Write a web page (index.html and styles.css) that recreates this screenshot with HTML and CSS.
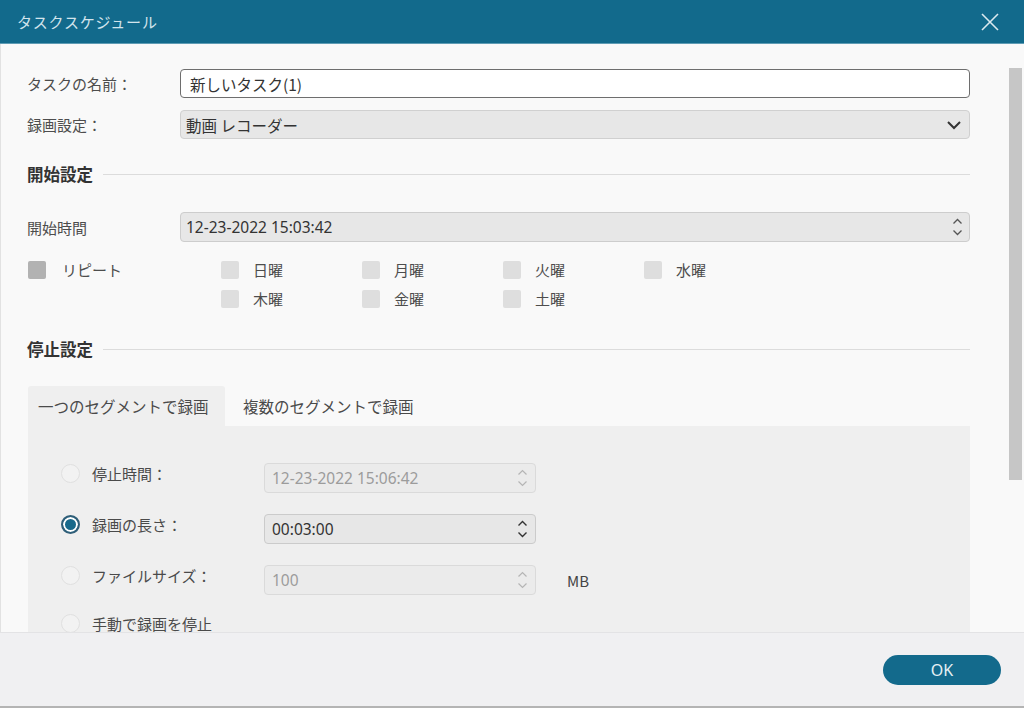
FILE: index.html
```html
<!DOCTYPE html>
<html lang="ja">
<head>
<meta charset="utf-8">
<title>タスクスケジュール</title>
<link rel="stylesheet" href="styles.css">
</head>
<body>
<div class="window">
  <header class="titlebar">
    <span class="title">タスクスケジュール</span>
    <svg class="close" width="20" height="20" viewBox="0 0 20 20"><path d="M2 2 L18 18 M18 2 L2 18" stroke="#dbe9ef" stroke-width="1.6" fill="none"/></svg>
  </header>
  <div class="main">
    <div class="content">
      <div class="frow">
        <label class="flabel">タスクの名前：</label>
        <div class="field field-text">新しいタスク(1)</div>
      </div>
      <div class="frow">
        <label class="flabel">録画設定：</label>
        <div class="field field-select">
          <span>動画 レコーダー</span>
          <svg class="chev" width="16" height="10" viewBox="0 0 16 10"><path d="M2 2 L8 8 L14 2" stroke="#333" stroke-width="2" fill="none"/></svg>
        </div>
      </div>

      <div class="section s-start"><span class="stitle">開始設定</span><span class="sline"></span></div>

      <div class="frow frow-start">
        <label class="flabel">開始時間</label>
        <div class="field field-spin">
          <span class="num">12-23-2022 15:03:42</span>
          <span class="spin">
            <svg width="11" height="7" viewBox="0 0 11 7"><path d="M1.5 5.5 L5.5 1.5 L9.5 5.5" stroke="#555" stroke-width="1.3" fill="none"/></svg>
            <svg width="11" height="7" viewBox="0 0 11 7"><path d="M1.5 1.5 L5.5 5.5 L9.5 1.5" stroke="#555" stroke-width="1.3" fill="none"/></svg>
          </span>
        </div>
      </div>

      <div class="checks">
        <div class="check"><span class="box box-dark"></span><span class="clabel">リピート</span></div>
        <div class="check"><span class="box"></span><span class="clabel">日曜</span></div>
        <div class="check"><span class="box"></span><span class="clabel">月曜</span></div>
        <div class="check"><span class="box"></span><span class="clabel">火曜</span></div>
        <div class="check"><span class="box"></span><span class="clabel">水曜</span></div>
        <div class="check empty"></div>
        <div class="check"><span class="box"></span><span class="clabel">木曜</span></div>
        <div class="check"><span class="box"></span><span class="clabel">金曜</span></div>
        <div class="check"><span class="box"></span><span class="clabel">土曜</span></div>
      </div>

      <div class="section s-stop"><span class="stitle">停止設定</span><span class="sline"></span></div>

      <div class="tabs">
        <div class="tab active">一つのセグメントで録画</div>
        <div class="tab">複数のセグメントで録画</div>
      </div>
      <div class="panel">
        <div class="prow">
          <div class="opt"><span class="radio"></span><span class="olabel">停止時間：</span></div>
          <div class="pfield disabled">
            <span class="num">12-23-2022 15:06:42</span>
            <span class="spin">
              <svg width="11" height="7" viewBox="0 0 11 7"><path d="M1.5 5.5 L5.5 1.5 L9.5 5.5" stroke="#b5b5b5" stroke-width="1.2" fill="none"/></svg>
              <svg width="11" height="7" viewBox="0 0 11 7"><path d="M1.5 1.5 L5.5 5.5 L9.5 1.5" stroke="#b5b5b5" stroke-width="1.2" fill="none"/></svg>
            </span>
          </div>
        </div>
        <div class="prow">
          <div class="opt"><span class="radio checked"></span><span class="olabel">録画の長さ：</span></div>
          <div class="pfield">
            <span class="num">00:03:00</span>
            <span class="spin">
              <svg width="11" height="7" viewBox="0 0 11 7"><path d="M1.5 5.5 L5.5 1.5 L9.5 5.5" stroke="#333" stroke-width="1.4" fill="none"/></svg>
              <svg width="11" height="7" viewBox="0 0 11 7"><path d="M1.5 1.5 L5.5 5.5 L9.5 1.5" stroke="#333" stroke-width="1.4" fill="none"/></svg>
            </span>
          </div>
        </div>
        <div class="prow prow-tight">
          <div class="opt"><span class="radio"></span><span class="olabel">ファイルサイズ：</span></div>
          <div class="pfield disabled">
            <span class="num">100</span>
            <span class="spin">
              <svg width="11" height="7" viewBox="0 0 11 7"><path d="M1.5 5.5 L5.5 1.5 L9.5 5.5" stroke="#b5b5b5" stroke-width="1.2" fill="none"/></svg>
              <svg width="11" height="7" viewBox="0 0 11 7"><path d="M1.5 1.5 L5.5 5.5 L9.5 1.5" stroke="#b5b5b5" stroke-width="1.2" fill="none"/></svg>
            </span>
          </div>
          <span class="unit">MB</span>
        </div>
        <div class="prow">
          <div class="opt"><span class="radio"></span><span class="olabel">手動で録画を停止</span></div>
        </div>
      </div>
    </div>
    <div class="scrollcol"><div class="thumb"></div></div>
  </div>
  <footer class="footer">
    <button class="ok">OK</button>
  </footer>
</div>
</body>
</html>
```

FILE: styles.css
```css
* { box-sizing: border-box; }
html, body { margin: 0; padding: 0; }
body {
  width: 1024px;
  height: 708px;
  overflow: hidden;
  font-family: "Noto Sans CJK JP", "Noto Sans", sans-serif;
  font-size: 15px;
  color: #4a4a4a;
  background: #f9f9f9;
}
.window {
  width: 1024px;
  height: 708px;
  display: flex;
  flex-direction: column;
  border-bottom: 2px solid #b4b4b4;
}
.titlebar {
  height: 44px;
  flex: none;
  background: #126a8c;
  display: flex;
  align-items: center;
  justify-content: space-between;
  padding: 0 24px 0 17px;
  border-bottom: 1px solid #5f9cb4;
}
.title {
  color: #d2e4ec;
  font-size: 15px;
  letter-spacing: 0.8px;
}
.close { display: block; margin-top: 1px; }
.main {
  flex: 1;
  display: flex;
  overflow: hidden;
  border-left: 1px solid #e2e2e2;
  background: #f9f9f9;
}
.content {
  width: 969px;
  flex: none;
  padding: 25px 0 0 26px;
}
.frow {
  display: flex;
  align-items: center;
  height: 29px;
  margin-bottom: 12px;
}
.flabel {
  width: 153px;
  flex: none;
  color: #4d4d4d;
}
.field {
  flex: 1;
  height: 29px;
  border-radius: 4px;
  display: flex;
  align-items: center;
  padding: 0 9px;
  color: #333;
  font-size: 15.5px;
}
.num {
  font-family: "Noto Sans", "Open Sans", sans-serif;
  font-size: 15.5px;
}
.field-text {
  background: #fff;
  border: 1px solid #6e6e6e;
}
.field-select {
  background: #e7e7e7;
  border: 1px solid #d0d0d0;
  justify-content: space-between;
  padding: 0 7px 0 5px;
}
.chev { display: block; }
.section {
  display: flex;
  align-items: center;
  height: 22px;
  gap: 10px;
}
.s-start { margin-top: 24px; }
.stitle {
  font-weight: bold;
  font-size: 16.5px;
  color: #333;
}
.sline {
  flex: 1;
  height: 1px;
  background: #dcdcdc;
}
.frow-start {
  margin-top: 27px;
  height: 30px;
  margin-bottom: 0;
}
.field-spin {
  height: 30px;
  background: #e7e7e7;
  border: 1px solid #cdcdcd;
  justify-content: space-between;
  padding: 0 6px 0 5px;
}
.spin {
  display: flex;
  flex-direction: column;
  gap: 4px;
}
.spin svg { display: block; }
.checks {
  margin-top: 19px;
  display: grid;
  grid-template-columns: 194px 141px 141px 141px 141px;
  grid-auto-rows: 18px;
  row-gap: 11px;
}
.check {
  display: flex;
  align-items: center;
  gap: 14px;
}
.box {
  width: 18px;
  height: 18px;
  background: #dedede;
  border-radius: 2px;
  flex: none;
}
.box-dark { background: #b2b2b2; margin-left: 1px; margin-right: 2px; }
.clabel { color: #4d4d4d; line-height: 18px; }
.s-stop { margin-top: 30px; }
.tabs {
  margin-top: 26px;
  display: flex;
  height: 40px;
  margin-left: 1px;
}
.tab {
  display: flex;
  align-items: center;
  padding: 0 10px;
  font-size: 15.5px;
  color: #4a4a4a;
}
.tab.active {
  width: 197px;
  background: #efefef;
  border-radius: 3px 3px 0 0;
}
.tab:not(.active) { padding-left: 18px; }
.panel {
  margin-left: 1px;
  background: #efefef;
  padding: 37px 0 0 33px;
  height: 260px;
}
.prow {
  display: flex;
  align-items: flex-start;
  height: 30px;
  margin-bottom: 21px;
}
.prow-tight { margin-bottom: 18px; }
.opt {
  width: 203px;
  flex: none;
  display: flex;
  align-items: center;
  gap: 12px;
  height: 19px;
  margin-top: 1px;
}
.olabel { color: #4a4a4a; line-height: 19px; }
.radio {
  width: 19px;
  height: 19px;
  border-radius: 50%;
  border: 1px solid #e0e0e0;
  background: #f2f2f2;
  flex: none;
}
.radio.checked {
  border: 2px solid #2f5e78;
  background: #17698b;
  box-shadow: inset 0 0 0 2px #fff;
}
.pfield {
  width: 272px;
  height: 30px;
  border-radius: 4px;
  border: 1px solid #cbcbcb;
  background: #e7e7e7;
  display: flex;
  align-items: center;
  justify-content: space-between;
  padding: 0 7px 0 7px;
  color: #333;
}
.pfield.disabled {
  border-color: #dadada;
  background: #ebebeb;
  color: #9c9c9c;
}
.unit {
  margin-left: 31px;
  align-self: center;
  color: #444;
}
.scrollcol {
  flex: 1;
  padding: 24px 0 0 39px;
}
.thumb {
  width: 13px;
  height: 412px;
  background: #c6c6c6;
}
.footer {
  height: 74px;
  flex: none;
  background: #f0f0f2;
  border-top: 1px solid #e3e3e5;
  display: flex;
  justify-content: flex-end;
  align-items: flex-start;
  padding: 22px 23px 0 0;
}
.ok {
  width: 118px;
  height: 30px;
  border-radius: 15px;
  border: none;
  background: #136a8c;
  color: #e6f0f4;
  font-family: "Noto Sans", "Liberation Sans", sans-serif;
  font-size: 16px;
  padding: 0;
}
```
